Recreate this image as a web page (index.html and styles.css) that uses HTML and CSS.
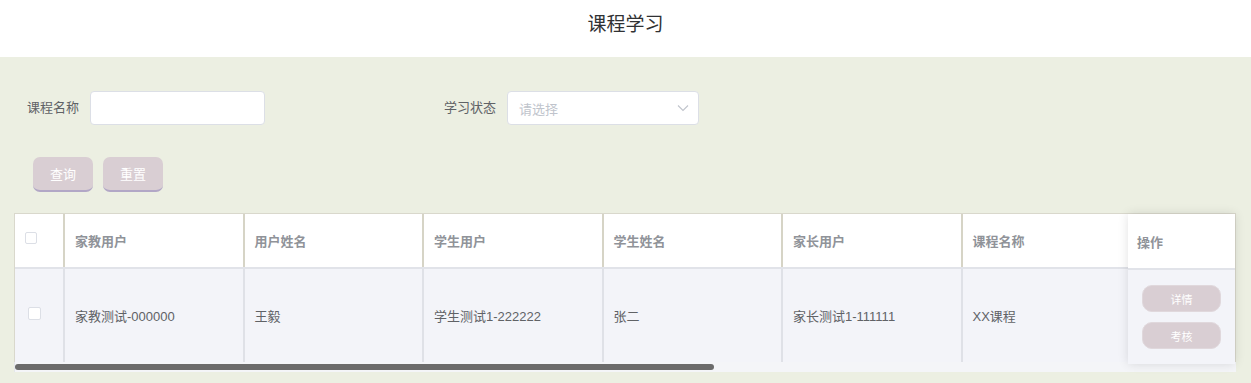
FILE: index.html
```html
<!DOCTYPE html>
<html lang="zh">
<head>
<meta charset="utf-8">
<title>课程学习</title>
<link rel="stylesheet" href="styles.css">
</head>
<body>
<header class="top">
  <h1 class="title">课程学习</h1>
</header>
<main class="main">
  <form class="search">
    <div class="item">
      <label class="label">课程名称</label>
      <div class="input"></div>
    </div>
    <div class="item item-2">
      <label class="label">学习状态</label>
      <div class="input select">
        <span class="placeholder">请选择</span>
        <svg class="arrow" width="12" height="8" viewBox="0 0 12 8"><path d="M1 1.5 L6 6.5 L11 1.5" fill="none" stroke="#c0c4cc" stroke-width="1.1"/></svg>
      </div>
    </div>
  </form>
  <div class="actions">
    <button class="btn" type="button">查询</button>
    <button class="btn" type="button">重置</button>
  </div>
  <div class="table-box">
    <div class="scroller">
      <table class="grid">
        <colgroup>
          <col class="c-check"><col class="c-col"><col class="c-col"><col class="c-col"><col class="c-col"><col class="c-col"><col class="c-col"><col class="c-rest">
        </colgroup>
        <thead>
          <tr>
            <th><span class="check"></span></th>
            <th>家教用户</th>
            <th>用户姓名</th>
            <th>学生用户</th>
            <th>学生姓名</th>
            <th>家长用户</th>
            <th>课程名称</th>
            <th></th>
          </tr>
        </thead>
        <tbody>
          <tr>
            <td><span class="check check-body"></span></td>
            <td>家教测试-000000</td>
            <td>王毅</td>
            <td>学生测试1-222222</td>
            <td>张二</td>
            <td>家长测试1-111111</td>
            <td>XX课程</td>
            <td></td>
          </tr>
        </tbody>
      </table>
    </div>
    <div class="hscroll"><div class="thumb"></div></div>
    <div class="fixed-right">
      <div class="fx-head">操作</div>
      <div class="fx-body">
        <button class="op" type="button">详情</button>
        <button class="op" type="button">考核</button>
      </div>
    </div>
  </div>
</main>
</body>
</html>
```

FILE: styles.css
```css
* { box-sizing: border-box; }
html, body { margin: 0; padding: 0; }
body {
  font-family: "Liberation Sans", "Noto Sans CJK SC", sans-serif;
  font-size: 13px;
  color: #606266;
  background: #ecefe2;
  overflow: hidden;
}
.top {
  height: 57px;
  background: #fff;
  display: flex;
  justify-content: center;
  align-items: flex-start;
}
.title {
  margin: 13px 0 0;
  font-size: 19px;
  font-weight: normal;
  color: #303133;
  line-height: 24px;
}
.main {
  background: #ecefe2;
  padding: 34px 15px 20px 14px;
  height: 326px;
}
.search {
  display: flex;
  align-items: center;
  height: 34px;
}
.item { display: flex; align-items: center; }
.item-2 { margin-left: 166px; }
.label {
  width: 76px;
  text-align: right;
  padding-right: 11px;
  color: #606266;
  font-size: 13px;
  line-height: 30px;
}
.input {
  width: 175px;
  height: 34px;
  background: #fff;
  border: 1px solid #dcdfe6;
  border-radius: 4px;
}
.select {
  width: 192px;
  display: flex;
  align-items: center;
  justify-content: space-between;
  padding: 0 9px 0 11px;
}
.placeholder { color: #c0c4cc; font-size: 13px; }
.arrow { display: block; }
.actions {
  display: flex;
  gap: 10px;
  margin: 32px 0 0 19px;
}
.btn {
  width: 60px;
  height: 35px;
  border: none;
  border-bottom: 2px solid #b2a7c6;
  border-radius: 7px;
  background: #d9ced3;
  color: #fff;
  font: 13px "Liberation Sans", "Noto Sans CJK SC", sans-serif;
  padding: 0;
}
.table-box {
  position: relative;
  margin-top: 21px;
  width: 1222px;
}
.scroller {
  overflow: hidden;
  border-top: 1px solid #d9d8cc;
  border-left: 1px solid #d9d8cc;
  border-right: 1px solid #d9d8cc;
  background: #f3f4f9;
}
.grid {
  border-collapse: collapse;
  table-layout: fixed;
  width: 1400px;
}
.c-check { width: 49px; }
.c-col { width: 179.5px; }
.c-rest { width: 274px; }
.grid th {
  height: 54px;
  background: #fff;
  border-right: 2px solid #d6d4c6;
  border-bottom: 2px solid #e1e3e9;
  text-align: left;
  padding: 0 10px;
  font-weight: 600;
  color: #909399;
  font-size: 13px;
}
.grid td {
  height: 94px;
  background: #f3f4f9;
  border-right: 2px solid #dfe1e7;
  padding: 0 10px;
  color: #606266;
  font-size: 13px;
  white-space: nowrap;
}
.check {
  display: block;
  width: 12px;
  height: 12px;
  background: #fff;
  border: 1px solid #dcdfe6;
  border-radius: 2px;
  margin-top: -6px;
}
.check-body { margin-left: 3px; width: 13px; height: 13px; margin-top: -4px; }
.hscroll {
  height: 10px;
  background: #f4f5f8;
  border-left: 1px solid #e4e6ea;
  padding-top: 2px;
}
.thumb {
  width: 699px;
  height: 6px;
  background: #6b6b6b;
  border-radius: 3px;
}
.fixed-right {
  position: absolute;
  top: 1px;
  right: 1px;
  width: 107px;
  height: 150px;
  background: #f3f4f9;
  box-shadow: 0 0 10px rgba(0, 0, 0, 0.12);
}
.fx-head {
  height: 56px;
  background: #fff;
  border-bottom: 2px solid #e1e3e9;
  padding: 0 9px;
  display: flex;
  align-items: center;
  color: #909399;
  font-weight: 600;
  font-size: 13px;
}
.fx-body {
  height: 94px;
  display: flex;
  flex-direction: column;
  align-items: center;
  justify-content: center;
  gap: 10px;
}
.op {
  width: 79px;
  height: 27px;
  border: 1px solid #e0d8dc;
  border-radius: 10px;
  background: #d9ced3;
  color: #fff;
  font: 11px "Liberation Sans", "Noto Sans CJK SC", sans-serif;
  padding: 0;
}
```
